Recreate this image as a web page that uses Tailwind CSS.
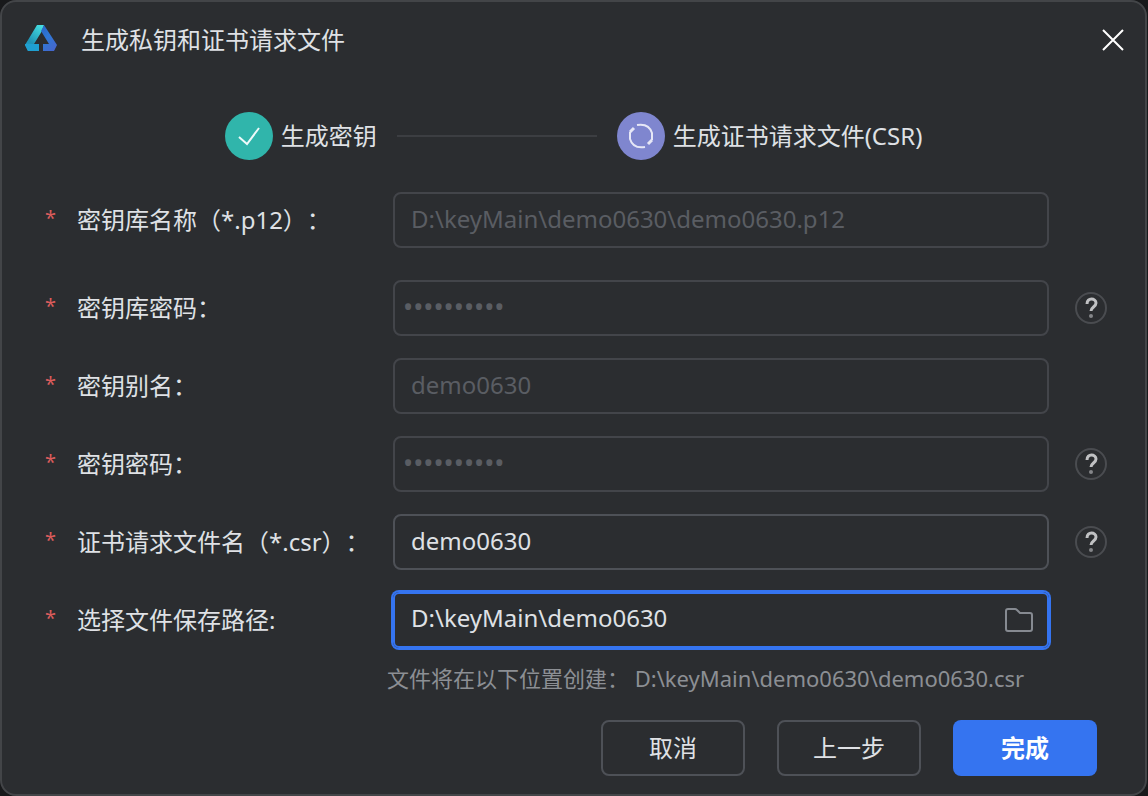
<!DOCTYPE html>
<html lang="zh-CN">
<head>
    <meta charset="UTF-8">
    <meta name="viewport" content="width=device-width, initial-scale=1.0">
    <title>生成私钥和证书请求文件</title>
    <script src="https://cdn.jsdelivr.net/npm/@tailwindcss/browser@4"></script>
</head>
<body class="bg-[#18191b] pr-px font-['Noto_Sans','Noto_Sans_CJK_SC',sans-serif] text-2xl text-[#dfe1e5] [text-spacing-trim:space-all]">
    <div role="dialog" aria-labelledby="dialogTitle" class="flex min-h-screen flex-col rounded-2xl border-2 border-[#434548] bg-[#2b2d30]">
        <!-- Title bar -->
        <header class="flex items-center pt-5 pr-[18px] pl-[22px]">
            <svg class="h-9 w-9" viewBox="0 0 36 36" aria-hidden="true">
                <defs>
                    <linearGradient id="logoLeft" x1="0.8" y1="0" x2="0.2" y2="1">
                        <stop offset="0" stop-color="#45dde0"/>
                        <stop offset="0.7" stop-color="#1f93b4"/>
                        <stop offset="1" stop-color="#1f9fd0"/>
                    </linearGradient>
                    <linearGradient id="logoRight" x1="0" y1="0" x2="0.7" y2="1">
                        <stop offset="0" stop-color="#2a63c4"/>
                        <stop offset="0.5" stop-color="#2f78d6"/>
                        <stop offset="1" stop-color="#4467cc"/>
                    </linearGradient>
                </defs>
                <path d="M13 3h7l-2 6-8 13h5v7H4l-3-6z" fill="url(#logoLeft)"/>
                <path d="M1 22h14v7H4l-3-6z" fill="#1f9fd0"/>
                <path d="M20 3l13 20-3 6H19v-7h6L17 9z" fill="url(#logoRight)"/>
            </svg>
            <h1 id="dialogTitle" class="ml-[21px] flex-1 leading-9">生成私钥和证书请求文件</h1>
            <button type="button" aria-label="关闭" class="p-0.5 text-white">
                <svg class="h-6 w-6" viewBox="0 0 24 24" fill="none" stroke="currentColor" stroke-width="2">
                    <path d="M2 2l20 20M22 2L2 22"/>
                </svg>
            </button>
        </header>

        <!-- Steps -->
        <ol class="mt-[54px] flex items-center justify-center gap-5">
            <li class="flex items-center gap-2">
                <svg class="h-12 w-12" viewBox="0 0 48 48" fill="none" aria-hidden="true">
                    <circle cx="24" cy="24" r="24" fill="#30b5ab"/>
                    <path d="M14 25l8 7 12-16" stroke="#eefafa" stroke-width="2"/>
                </svg>
                <span>生成密钥</span>
            </li>
            <li aria-hidden="true" class="h-0.5 w-[200px] bg-[#3c3e42]"></li>
            <li class="flex items-center gap-2" aria-current="step">
                <svg class="h-12 w-12" viewBox="0 0 48 48" fill="none" aria-hidden="true">
                    <circle cx="24" cy="24" r="24" fill="#7f86cf"/>
                    <path d="M20 13q12-2 15 8v7M28 35q-12 2-15-8v-7" stroke="#e6e7f6" stroke-width="2"/>
                    <path d="M13 20l4-4M35 28l-4 4" stroke="#e6e7f6" stroke-width="3"/>
                </svg>
                <span>生成证书请求文件(CSR)</span>
            </li>
        </ol>

        <form class="mt-8 flex flex-1 flex-col pr-[38px] pl-[43px]">
            <div class="flex items-center">
                <span class="w-8 pb-1 text-xl text-[#db5c5c]">*</span>
                <label for="storeName" class="w-[316px]">密钥库名称（*.p12）：</label>
                <input id="storeName" type="text" value="D:\keyMain\demo0630\demo0630.p12" disabled class="h-14 min-w-0 flex-1 rounded-lg border-2 border-[#43454a] px-4 pb-1 text-[#5a5d63]">
                <span class="ml-[26px] w-8"></span>
            </div>

            <div class="mt-8 flex items-center">
                <span class="w-8 pb-1 text-xl text-[#db5c5c]">*</span>
                <label for="storePassword" class="w-[316px]">密钥库密码：</label>
                <input id="storePassword" type="password" value="abcdef0630" disabled class="h-14 min-w-0 flex-1 rounded-lg border-2 border-[#43454a] px-2 pb-1 text-[27px] text-[#5a5d63]">
                <button type="button" aria-label="帮助" class="ml-[26px] h-8 w-8">
                    <svg class="h-8 w-8" viewBox="0 0 32 32" fill="none">
                        <circle cx="16" cy="16" r="15" stroke="#4a4c50" stroke-width="2"/>
                        <path d="M12 12c0-7 9-6 9-1 0 4-5 4-5 8" stroke="#c0c1c3" stroke-width="3"/>
                        <circle cx="16" cy="24" r="2" fill="#85868a"/>
                    </svg>
                </button>
            </div>

            <div class="mt-[22px] flex items-center">
                <span class="w-8 pb-1 text-xl text-[#db5c5c]">*</span>
                <label for="keyAlias" class="w-[316px]">密钥别名：</label>
                <input id="keyAlias" type="text" value="demo0630" disabled class="h-14 min-w-0 flex-1 rounded-lg border-2 border-[#43454a] px-4 pb-1 text-[#5a5d63]">
                <span class="ml-[26px] w-8"></span>
            </div>

            <div class="mt-[22px] flex items-center">
                <span class="w-8 pb-1 text-xl text-[#db5c5c]">*</span>
                <label for="keyPassword" class="w-[316px]">密钥密码：</label>
                <input id="keyPassword" type="password" value="abcdef0630" disabled class="h-14 min-w-0 flex-1 rounded-lg border-2 border-[#43454a] px-2 pb-1 text-[27px] text-[#5a5d63]">
                <button type="button" aria-label="帮助" class="ml-[26px] h-8 w-8">
                    <svg class="h-8 w-8" viewBox="0 0 32 32" fill="none">
                        <circle cx="16" cy="16" r="15" stroke="#4a4c50" stroke-width="2"/>
                        <path d="M12 12c0-7 9-6 9-1 0 4-5 4-5 8" stroke="#c0c1c3" stroke-width="3"/>
                        <circle cx="16" cy="24" r="2" fill="#85868a"/>
                    </svg>
                </button>
            </div>

            <div class="mt-[22px] flex items-center">
                <span class="w-8 pb-1 text-xl text-[#db5c5c]">*</span>
                <label for="csrName" class="w-[316px]">证书请求文件名（*.csr）：</label>
                <input id="csrName" type="text" value="demo0630" class="h-14 min-w-0 flex-1 rounded-lg border-2 border-[#4e5157] px-4 pb-1">
                <button type="button" aria-label="帮助" class="ml-[26px] h-8 w-8">
                    <svg class="h-8 w-8" viewBox="0 0 32 32" fill="none">
                        <circle cx="16" cy="16" r="15" stroke="#4a4c50" stroke-width="2"/>
                        <path d="M12 12c0-7 9-6 9-1 0 4-5 4-5 8" stroke="#c0c1c3" stroke-width="3"/>
                        <circle cx="16" cy="24" r="2" fill="#85868a"/>
                    </svg>
                </button>
            </div>

            <div class="mt-[22px] flex items-center">
                <span class="w-8 pb-1 text-xl text-[#db5c5c]">*</span>
                <label for="savePath" class="w-[316px]">选择文件保存路径:</label>
                <div class="flex h-14 min-w-0 flex-1 items-center rounded-md border-2 border-[#3574f0] pr-3 pl-4 ring-2 ring-[#3574f0]">
                    <input id="savePath" type="text" value="D:\keyMain\demo0630" class="min-w-0 flex-1 pb-1 outline-none">
                    <button type="button" aria-label="浏览" class="text-[#868a91]">
                        <svg class="h-8 w-8" viewBox="0 0 32 32" fill="none" stroke="currentColor" stroke-width="2">
                            <path d="M3 7a2 2 0 0 1 2-2h7q1 0 2 1l3 3h10a2 2 0 0 1 2 2v14a2 2 0 0 1-2 2H5a2 2 0 0 1-2-2z"/>
                        </svg>
                    </button>
                </div>
                <span class="ml-[26px] w-8"></span>
            </div>

            <p class="mt-[14px] pl-[342px] text-[22px] leading-8 whitespace-nowrap text-[#8c8f94]">文件将在以下位置创建： D:\keyMain\demo0630\demo0630.csr</p>

            <div class="mt-auto flex justify-end gap-8 pt-6 pr-[10px] pb-[18px]">
                <button type="button" class="h-14 w-36 rounded-lg border-2 border-[#4e5157]">取消</button>
                <button type="button" class="h-14 w-36 rounded-lg border-2 border-[#4e5157]">上一步</button>
                <button type="submit" class="h-14 w-36 rounded-lg bg-[#3574f0] font-bold text-white">完成</button>
            </div>
        </form>
    </div>
</body>
</html>
